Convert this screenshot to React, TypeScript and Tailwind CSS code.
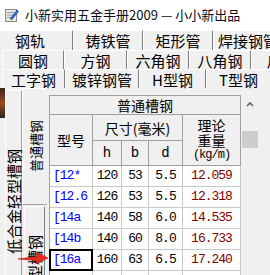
import React from "react";

const rows = [
  { code: "[12*", h: "120", b: "53", d: "5.5", w: "12.059" },
  { code: "[12.6", h: "126", b: "53", d: "5.5", w: "12.318" },
  { code: "[14a", h: "140", b: "58", d: "6.0", w: "14.535" },
  { code: "[14b", h: "140", b: "60", d: "8.0", w: "16.733" },
  { code: "[16a", h: "160", b: "63", d: "6.5", w: "17.240" },
  { code: "[16", h: "160", b: "65", d: "8.5", w: "19.752" },
];

const tabRows = [
  { pad: "-ml-[13px]", h: "h-[20px]", tabs: [["钢轨", "w-[86px]"], ["铸铁管", "w-[70px]"], ["矩形管", "w-[70px]"], ["焊接钢管", "w-[70px]"]] },
  { pad: "ml-[2px]", h: "h-[19px]", tabs: [["圆钢", "w-[62px]"], ["方钢", "w-[63px]"], ["六角钢", "w-[62px]"], ["八角钢", "w-[62px]"], ["扁钢", "w-[62px]"]] },
  { pad: "ml-[2px]", h: "h-[19px]", tabs: [["工字钢", "w-[63px]"], ["镀锌钢管", "w-[74px]"], ["H型钢", "w-[67px]"], ["T型钢", "w-[65px]"]] },
];

function AppIcon() {
  return (
    <svg width="14" height="14" viewBox="0 0 14 14">
      <rect x="0.5" y="1.5" width="11" height="12" fill="#e8e8e8" stroke="#8a8a8a" />
      <line x1="2" y1="4.5" x2="9" y2="4.5" stroke="#9a9a9a" />
      <line x1="2" y1="7" x2="9" y2="7" stroke="#9a9a9a" />
      <line x1="2" y1="9.5" x2="9" y2="9.5" stroke="#9a9a9a" />
      <path d="M5 11 L12 2 L13.5 3.5 L6.5 12 Z" fill="#2a6ad8" stroke="#1a3a90" strokeWidth="0.6" />
      <path d="M5 11 L4.5 12.5 L6.5 12 Z" fill="#f0c040" />
    </svg>
  );
}

function VText({ children, size }: { children: React.ReactNode; size: string }) {
  return (
    <span className={`[writing-mode:vertical-rl] [text-orientation:sideways] rotate-180 leading-none ${size}`}>
      {children}
    </span>
  );
}

export default function App() {
  const head = "border-r border-b border-[#a0a0a0] bg-[#f0f0f0] flex items-center justify-center";
  const cell = "border-r border-b border-[#c8c8c8] flex items-center justify-center";
  return (
    <div className="relative w-[270px] h-[275px] overflow-hidden bg-[#f0f0f0] text-black font-['Noto_Sans_CJK_SC',sans-serif]">
      {/* title bar */}
      <div className="h-[30px] bg-white flex items-center pl-[5px] gap-[6px]">
        <AppIcon />
        <span className="text-[13px] text-[#0a0a20] whitespace-nowrap">小新实用五金手册2009 — 小小新出品</span>
      </div>

      {/* tab rows */}
      {tabRows.map((r, i) => (
        <div key={i} className={`flex ${r.h} ${r.pad}`}>
          {r.tabs.map(([label, w]) => (
            <div
              key={label}
              className={`${w} shrink-0 flex items-center justify-center border-l border-t border-white border-r border-r-[#808080] text-[15px] leading-none whitespace-nowrap`}
            >
              {label}
            </div>
          ))}
        </div>
      ))}

      {/* panel */}
      <div className="flex h-[187px] overflow-hidden">
        <div className="w-[5px] flex flex-col">
          <div className="h-[30px] shrink-0 bg-gradient-to-b from-[#3a2418] via-[#a04a18] to-[#2a2020]" />
        </div>

        <div className="w-[17px] pt-[2px]">
          <div className="h-[222px] border-l border-t border-white border-r border-r-[#a0a0a0] rounded-tl-[2px] flex items-center justify-center">
            <VText size="text-[15px]">低合金轻型槽钢</VText>
          </div>
        </div>

        <div className="w-[25px] flex flex-col">
          <div className="h-[117px] shrink-0 border-l border-t border-white border-b border-b-[#a0a0a0] flex items-center justify-center">
            <VText size="text-[13px]">普通槽钢</VText>
          </div>
          <div className="mt-[1px] mx-[2px] h-[120px] shrink-0 border-l border-t border-white border-r border-r-[#808080] flex items-start justify-center pt-[28px]">
            <VText size="text-[15px]">轻型槽钢</VText>
          </div>
        </div>

        <div className="flex-1 pl-[2px] pt-[7px] flex items-start">
          <div className="w-[192px] shrink-0 grid grid-cols-[43px_29px_27px_34px_58px] grid-rows-[19px_26px_25px_repeat(6,21px)] border-l border-t border-[#a0a0a0] bg-white">
            <div className={`${head} col-span-5 text-[14px] leading-none`}>普通槽钢</div>
            <div className={`${head} row-span-2 text-[14px] leading-none`}>型号</div>
            <div className={`${head} col-span-3 text-[14px] leading-none`}>尺寸(毫米)</div>
            <div className={`${head} row-span-2 flex-col text-[14px] leading-[15px]`}>
              <span>理论</span>
              <span>重量</span>
              <span className="font-['Liberation_Mono',monospace] text-[12px] tracking-[-1px]">(kg/m)</span>
            </div>
            {["h", "b", "d"].map((t) => (
              <div key={t} className={`${head} font-['Liberation_Mono',monospace] text-[14px]`}>
                {t}
              </div>
            ))}

            {rows.map((r) => (
              <React.Fragment key={r.code}>
                <div className={`relative border-r border-b border-[#c8c8c8] flex items-center pl-[3px] text-[#0000ff] font-['Liberation_Mono',monospace] text-[13px] tracking-[-1px]`}>
                  {r.code}
                  {r.code === "[16a" && <div className="absolute -left-px -top-px -right-px -bottom-px border-2 border-black" />}
                </div>
                <div className={`${cell} font-['Liberation_Mono',monospace] text-[13px] tracking-[-1px]`}>{r.h}</div>
                <div className={`${cell} font-['Liberation_Mono',monospace] text-[13px] tracking-[-1px]`}>{r.b}</div>
                <div className={`${cell} font-['Liberation_Mono',monospace] text-[13px] tracking-[-1px]`}>{r.d}</div>
                <div className={`${cell} text-[#800000] font-['Liberation_Mono',monospace] text-[13px] tracking-[-1px]`}>{r.w}</div>
              </React.Fragment>
            ))}
          </div>

          {/* scrollbar */}
          <div className="w-[16px] ml-px flex flex-col items-center">
            <div className="h-[17px] w-full flex items-center justify-center">
              <svg width="8" height="6" viewBox="0 0 8 6">
                <path d="M1 5 L4 2 L7 5" fill="none" stroke="#606060" strokeWidth="1.6" />
              </svg>
            </div>
            <div className="mt-[19px] h-[17px] w-full bg-[#cdcdcd]" />
          </div>
        </div>
      </div>

      {/* red pointer arrow */}
      <svg className="absolute left-[18px] top-[251px]" width="30" height="14" viewBox="0 0 30 14">
        <path d="M0 8 L19 5.5 L18 1 L30 7 L18 13 L19 9.5 Z" fill="#e8291c" stroke="#b01810" strokeWidth="0.6" />
      </svg>
    </div>
  );
}
